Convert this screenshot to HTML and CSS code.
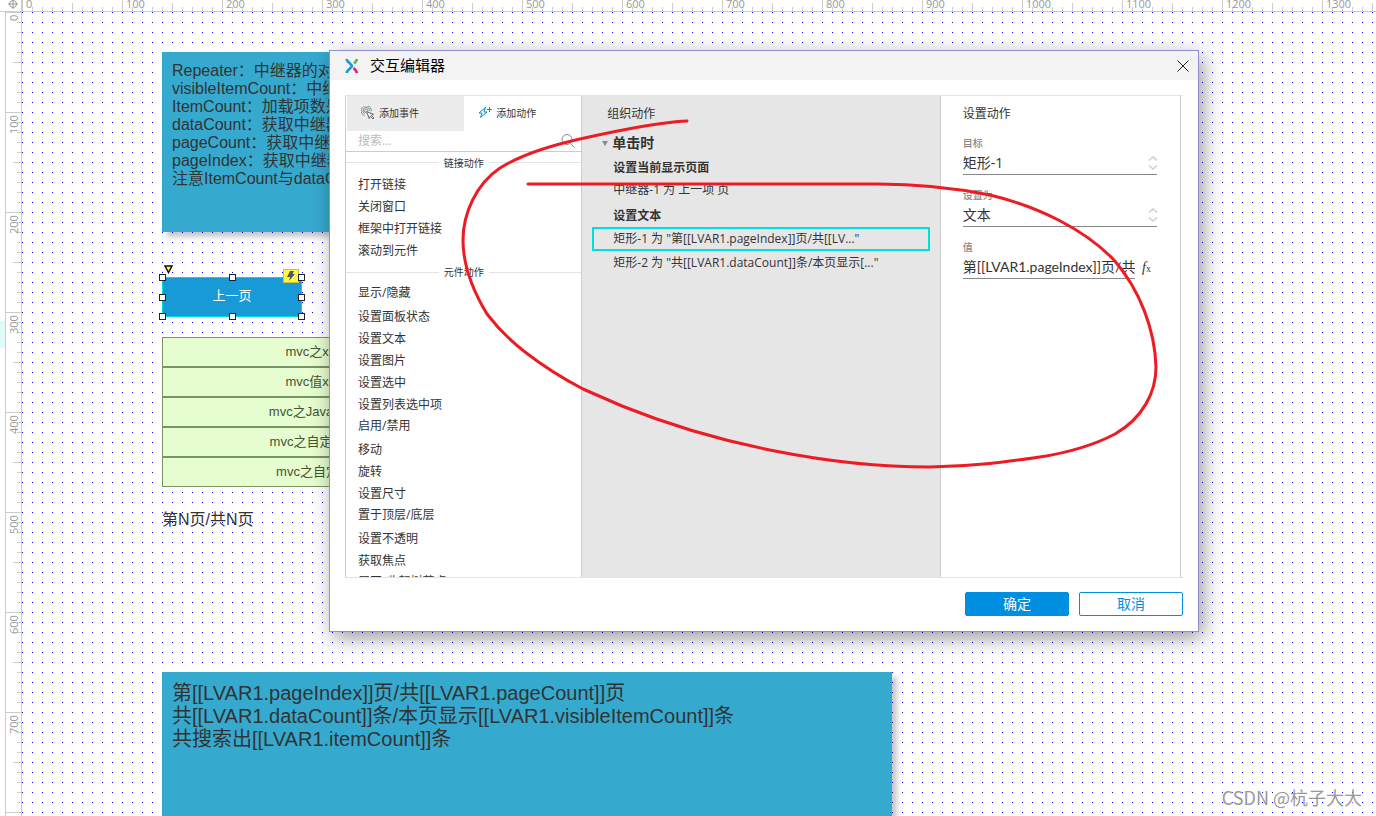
FILE: index.html
```html
<!DOCTYPE html>
<html lang="zh-CN">
<head>
<meta charset="utf-8">
<title>交互编辑器</title>
<link rel="stylesheet" href="styles.css">
</head>
<body>
<div class="app">
  <div class="ruler-corner">
    <svg width="12" height="12" viewBox="0 0 12 12" aria-hidden="true"><circle cx="6" cy="4" r="3.5"/><path d="M6 -1V9M1 4H11"/></svg>
  </div>
  <div class="ruler-top">
    <span>0</span><span>100</span><span>200</span><span>300</span><span>400</span><span>500</span><span>600</span><span>700</span><span>800</span><span>900</span><span>1000</span><span>1100</span><span>1200</span><span>1300</span>
  </div>
  <div class="ruler-side">
    <span class="ruler-mark"></span>
    <div class="ruler-scale">
      <span>0</span><span>100</span><span>200</span><span>300</span><span>400</span><span>500</span><span>600</span><span>700</span>
    </div>
  </div>

  <main class="canvas">
    <div class="note note-fields">Repeater：中继器的对象<br>visibleItemCount：中继器<br>ItemCount：加载项数是<br>dataCount：获取中继器<br>pageCount：获取中继器<br>pageIndex：获取中继器<br>注意ItemCount与dataCount</div>

    <div class="shape">
      <button class="shape-button" type="button">上一页</button>
      <svg class="shape-marker" width="10" height="9" viewBox="0 0 10 9" aria-hidden="true"><path d="M1 1H8L4.500 7.500Z"/></svg>
      <span class="bolt"><svg width="8" height="10" viewBox="0 0 8 10" aria-hidden="true"><path d="M3 0H7L5.500 3H8L2 10L3 6H0Z"/></svg></span>
      <i class="handle tl"></i><i class="handle tc"></i><i class="handle tr"></i>
      <i class="handle ml"></i><i class="handle mr"></i>
      <i class="handle bl"></i><i class="handle bc"></i><i class="handle br"></i>
    </div>

    <table class="repeater">
      <tbody>
        <tr><td>mvc之xml建模</td></tr>
        <tr><td>mvc值xml建模</td></tr>
        <tr><td>mvc之Java反射机制</td></tr>
        <tr><td>mvc之自定义标签库</td></tr>
        <tr><td>mvc之自定义标签</td></tr>
      </tbody>
    </table>

    <p class="page-label">第N页/共N页</p>

    <div class="note note-values">第[[LVAR1.pageIndex]]页/共[[LVAR1.pageCount]]页<br>共[[LVAR1.dataCount]]条/本页显示[[LVAR1.visibleItemCount]]条<br>共搜索出[[LVAR1.itemCount]]条</div>

    <p class="watermark">CSDN @杭子大大</p>

    <section class="dialog" role="dialog" aria-labelledby="dialog-title">
      <header class="dialog-head">
        <svg class="logo" width="14" height="16" viewBox="0 0 14 16" aria-hidden="true">
          <path class="logo-blue" d="M1.500 1C2 4 6 5.500 7 8C6 10.500 2 12 1.500 15"/>
          <path class="logo-green" d="M12 1C11.700 3 10.500 4 9 5.500"/>
          <path class="logo-pink" d="M8.500 10C10 11.500 11.700 13 12 15"/>
        </svg>
        <h1 id="dialog-title">交互编辑器</h1>
        <button class="close" type="button" aria-label="关闭"><svg width="12" height="12" viewBox="0 0 12 12" aria-hidden="true"><path d="M.5 .5L11.500 11.500M11.500 .5L.5 11.500"/></svg></button>
      </header>
      <div class="panels">
        <div class="panel actions">
          <div class="tabs">
            <button class="tab" type="button">
              <svg class="icon-event" width="14" height="14" viewBox="0 0 14 14" aria-hidden="true"><path d="M3.500 9.500A5 5 0 1 1 10.200 5.300M4 7.800A3.300 3.300 0 1 1 8.600 4.700M5 6.500A1.700 1.700 0 1 1 6.900 5"/><path class="cursor" d="M5.500 5.500L12.500 8.300L10.300 9.400L13 12L12 13L9.300 10.400L8.200 12.500Z"/></svg>
              添加事件</button>
            <button class="tab active" type="button">
              <svg class="icon-action" width="14" height="14" viewBox="0 0 14 14" aria-hidden="true"><path d="M7.500 1.500L1 7H4L2.500 11.500L9 6H6L7.500 1.500ZM9 3.500H14M11.500 1V6"/></svg>
              添加动作</button>
          </div>
          <label class="search">
            <input type="text" placeholder="搜索..." aria-label="搜索">
            <svg width="14" height="14" viewBox="0 0 14 14" aria-hidden="true"><circle cx="6" cy="5.500" r="5"/><path d="M9.500 9.500L13.500 13.500"/></svg>
          </label>
          <div class="action-list">
            <h2 class="group">链接动作</h2>
            <button type="button">打开链接</button>
            <button type="button">关闭窗口</button>
            <button type="button">框架中打开链接</button>
            <button type="button">滚动到元件</button>
            <h2 class="group">元件动作</h2>
            <button class="mixed" type="button">显示/隐藏</button>
            <button type="button">设置面板状态</button>
            <button type="button">设置文本</button>
            <button type="button">设置图片</button>
            <button type="button">设置选中</button>
            <button type="button">设置列表选中项</button>
            <button class="mixed" type="button">启用/禁用</button>
            <button type="button">移动</button>
            <button type="button">旋转</button>
            <button type="button">设置尺寸</button>
            <button class="mixed" type="button">置于顶层/底层</button>
            <button type="button">设置不透明</button>
            <button type="button">获取焦点</button>
            <button class="mixed" type="button">展开/收起树节点</button>
          </div>
        </div>
        <div class="panel organize">
          <h2>组织动作</h2>
          <h3><span class="caret"></span>单击时</h3>
          <h4>设置当前显示页面</h4>
          <button class="step" type="button">中继器-1 为 上一项 页</button>
          <h4>设置文本</h4>
          <button class="step selected" type="button">矩形-1 为 "第[[LVAR1.pageIndex]]页/共[[LV..."</button>
          <button class="step" type="button">矩形-2 为 "共[[LVAR1.dataCount]]条/本页显示[..."</button>
        </div>
        <form class="panel settings">
          <h2>设置动作</h2>
          <label for="target">目标</label>
          <div class="field">
            <select id="target"><option>矩形-1</option></select>
            <svg width="10" height="14" viewBox="0 0 10 14" aria-hidden="true"><path d="M1 4.500L5 1L9 4.500M1 9.500L5 13L9 9.500"/></svg>
          </div>
          <label for="set-to">设置为</label>
          <div class="field">
            <select id="set-to"><option>文本</option></select>
            <svg width="10" height="14" viewBox="0 0 10 14" aria-hidden="true"><path d="M1 4.500L5 1L9 4.500M1 9.500L5 13L9 9.500"/></svg>
          </div>
          <label for="value">值</label>
          <div class="value-row">
            <input id="value" type="text" value="第[[LVAR1.pageIndex]]页/共">
            <button class="fx" type="button" aria-label="编辑值"><i>f</i><small>x</small></button>
          </div>
        </form>
      </div>
      <footer class="dialog-foot">
        <button class="primary" type="button">确定</button>
        <button class="secondary" type="button">取消</button>
      </footer>
    </section>
  </main>

  <svg class="ink" aria-hidden="true">
    <path d="M687 121C665 122 620 130 580 139C540 148 516 158 500 168C476 184 463 214 463 240C463 262 470 286 487 314C500 331 512 342 525 352C543 366 562 378 583 389L622 406C674 427 724 441 775 451C830 462 880 467 930 467C980 466 1012 461 1040 457C1072 452 1096 444 1115 434C1143 418 1156 392 1156 367C1155 330 1140 290 1114 260C1085 230 1040 207 990 195C950 187 910 184 877 184L528 184"/>
  </svg>
</div>
</body>
</html>
```
FILE: styles.css
```css
* { box-sizing: border-box; }

body {
  margin: 0;
  background: #fff;
  color: #333;
  font-family: "Open Sans", "Noto Sans CJK SC", sans-serif;
  font-size: 12px;
}

h1, h2, h3, h4, p { margin: 0; font-weight: 400; }

button, input, select {
  margin: 0;
  padding: 0;
  border: 0;
  border-radius: 0;
  outline: 0;
  background: none;
  color: inherit;
  font: inherit;
}

svg { flex: none; fill: none; }

.app {
  position: relative;
  display: grid;
  grid-template-columns: 22px 1fr;
  grid-template-rows: 12px 1fr;
  height: 100vh;
  overflow: hidden;
}

/* Rulers */
.ruler-corner {
  padding-left: 7px;
  border-right: 1px solid #ccc;
  border-bottom: 1px solid #ccc;
  overflow: hidden;
}
.ruler-corner svg { display: block; stroke: #999; }

.ruler-top, .ruler-scale {
  display: flex;
  overflow: hidden;
  color: #999;
  font-size: 11px;
}
.ruler-top {
  border-bottom: 1px solid #ccc;
  line-height: 7px;
  background:
    repeating-linear-gradient(90deg, #ccc 0 1px, transparent 1px 100px),
    repeating-linear-gradient(90deg, #ccc 0 1px, transparent 1px 50px) 0 3px no-repeat,
    repeating-linear-gradient(90deg, #ccc 0 1px, transparent 1px 10px) 0 7px no-repeat;
}
.ruler-top span { flex: 0 0 100px; padding-left: 4px; }

.ruler-side { display: flex; min-height: 0; overflow: hidden; }
.ruler-mark {
  flex: 0 0 5px;
  height: 27px;
  margin-top: 309px;
  background: #e0fafa;
}
.ruler-scale {
  flex: 1;
  flex-direction: column;
  border-left: 1px solid #ccc;
  border-right: 1px solid #ccc;
  background:
    repeating-linear-gradient(#ccc 0 1px, transparent 1px 100px),
    repeating-linear-gradient(#ccc 0 1px, transparent 1px 50px) 7px 0 no-repeat,
    repeating-linear-gradient(#ccc 0 1px, transparent 1px 10px) 11px 0 no-repeat;
}
.ruler-scale span {
  flex: 0 0 100px;
  padding-bottom: 3px;
  line-height: 15px;
  text-align: right;
  writing-mode: vertical-rl;
  transform: rotate(180deg);
}

/* Canvas */
.canvas {
  position: relative;
  overflow: hidden;
  background-image:
    linear-gradient(90deg, transparent 1px, #fff 1px),
    linear-gradient(#00f 1px, #fff 1px);
  background-size: 10px 10px;
}

.note {
  position: absolute;
  left: 140px;
  width: 730px;
  padding: 10px;
  background: #36a9ce;
  box-shadow: 5px 5px 5px rgba(0, 0, 0, .22);
  font-family: "Liberation Sans", "Noto Sans CJK SC", sans-serif;
  white-space: nowrap;
}
.note-fields { top: 40px; height: 180px; font-size: 16px; line-height: 18px; }
.note-values { top: 660px; height: 180px; font-size: 20px; line-height: 23px; }

.shape { position: absolute; left: 140px; top: 265px; width: 140px; height: 40px; }
.shape-button {
  width: 100%;
  height: 100%;
  padding-bottom: 5px;
  border: 1px solid #00d9de;
  background: #189ad6;
  color: #fff;
  font-size: 13px;
}
.shape-marker { position: absolute; left: 2px; top: -12px; fill: #ff3; stroke: #111; stroke-width: 1.5; }
.bolt {
  position: absolute;
  right: 3px;
  top: -8px;
  display: grid;
  place-items: center;
  width: 16px;
  height: 14px;
  border: 1px solid #c9c33a;
  background: #fff845;
}
.bolt path { fill: #555; }
.handle { position: absolute; width: 7px; height: 7px; border: 1px solid #222; background: #fff; }
.tl, .tc, .tr { top: -3px; }
.ml, .mr { top: 17px; }
.bl, .bc, .br { bottom: -3px; }
.tl, .ml, .bl { left: -3px; }
.tc, .bc { left: 67px; }
.tr, .mr, .br { right: -3px; }

.repeater {
  position: absolute;
  left: 140px;
  top: 325px;
  width: 330px;
  border-spacing: 0;
  font-family: "Liberation Sans", "Noto Sans CJK SC", sans-serif;
  font-size: 13px;
}
.repeater td {
  height: 30px;
  padding: 0;
  border: 1px solid #799463;
  background: #e6fdcf;
  color: #43552f;
  line-height: 20px;
  text-align: center;
}

.page-label {
  position: absolute;
  left: 140px;
  top: 498px;
  font: 16px/20px "Liberation Sans", "Noto Sans CJK SC", sans-serif;
}

.watermark {
  position: absolute;
  right: 14px;
  bottom: 7px;
  color: #999;
  font: 18px/24px "Noto Sans CJK SC", sans-serif;
  text-shadow: 1px 1px 0 #fff;
}

/* Dialog */
.dialog {
  position: absolute;
  left: 307px;
  right: 177px;
  top: 38px;
  border: 1px solid #8f8fcf;
  background: #fff;
  box-shadow: 4px 6px 20px rgba(0, 0, 0, .4);
}
.dialog-head {
  display: flex;
  align-items: center;
  height: 29px;
  padding: 0 9px 0 15px;
  background: #f3f3f3;
  color: #000;
}
.dialog-head h1 { margin: 0 auto 0 11px; padding-bottom: 2px; font-size: 15px; line-height: 26px; }
.logo path { stroke-width: 2.6; }
.logo-blue { stroke: #1a9ad6; }
.logo-green { stroke: #6cb33f; }
.logo-pink { stroke: #e6187f; }
.close { display: grid; }
.close svg { stroke: #222; }

.panels {
  display: grid;
  grid-template-columns: 236fr 359fr 240fr;
  height: 483px;
  margin: 15px 15px 0 15px;
  padding-right: 2px;
  border-top: 1px solid #e3e3e3;
  border-bottom: 1px solid #e3e3e3;
}
.panel { min-width: 0; min-height: 0; overflow: hidden; }

.actions { display: flex; flex-direction: column; border-left: 1px solid #ccc; }
.tabs { display: grid; grid-template-columns: 1fr 1fr; flex: none; padding-left: 1px; }
.tab {
  display: flex;
  align-items: center;
  gap: 4px;
  height: 35px;
  padding: 0 0 2px 14px;
  background: #ececec;
  font-size: 10px;
}
.tab.active { background: #fff; }
.icon-event { stroke: #888; }
.icon-event .cursor { fill: #ececec; stroke: #666; }
.icon-action { stroke: #008fe0; }

.search {
  display: flex;
  flex: none;
  align-items: center;
  height: 21px;
  padding: 0 6px 0 12px;
  border-bottom: 1px solid #ccc;
}
.search input { flex: 1; min-width: 0; line-height: 18px; }
.search input::placeholder { color: #bbb; }
.search svg { stroke: #888; }

.action-list { display: flex; flex: 1; flex-direction: column; min-height: 0; overflow: hidden; }
.action-list > * { flex: none; }
.group {
  display: flex;
  align-items: center;
  gap: 5px;
  height: 22px;
  padding-bottom: 1px;
  font-size: 10px;
  line-height: 18px;
}
.group ~ .group { height: 21px; }
.group::before, .group::after { content: ""; flex: 1; height: 1px; background: #e3e3e3; }
.action-list button { height: 22px; padding-left: 12px; line-height: 20px; text-align: left; }
.action-list .mixed { height: 23px; padding-bottom: 3px; }

.organize {
  display: flex;
  flex-direction: column;
  padding: 8px 10px 0;
  border-left: 1px solid #ccc;
  border-right: 1px solid #ccc;
  background: #e6e6e6;
}
.organize h2 { margin-left: 15px; font-size: 12px; line-height: 20px; }
.organize h3 {
  display: flex;
  align-items: center;
  gap: 4px;
  margin: 9px 0 5px 10px;
  font-size: 14px;
  font-weight: 700;
  line-height: 20px;
}
.caret { border: solid transparent; border-width: 5px 3px 0; border-top-color: #888; }
.organize h4 { margin-left: 21px; font-size: 12px; font-weight: 700; line-height: 20px; }
.step { height: 24px; padding-left: 21px; line-height: 20px; text-align: left; white-space: nowrap; }
.step + h4 { margin-top: 4px; margin-bottom: 1px; }
.step.selected { padding-left: 19px; border: 2px solid #00dfdf; }

.settings { padding: 8px 23px 0 22px; border-right: 1px solid #ccc; }
.settings h2 { margin-bottom: 12px; font-size: 12px; line-height: 20px; }
.settings label {
  display: block;
  height: 14px;
  color: #888;
  font-size: 10px;
  font-weight: 500;
  line-height: 14px;
}
.field { position: relative; height: 25px; margin-bottom: 13px; border-bottom: 1px solid #888; }
.field select { width: 100%; height: 24px; appearance: none; font-size: 14px; }
.field svg { position: absolute; right: -1px; top: 6px; stroke: #ccc; stroke-width: 1.4; pointer-events: none; }
.value-row { display: flex; gap: 7px; height: 25px; }
.value-row input {
  flex: 1;
  min-width: 0;
  border-bottom: 1px solid #888;
  font-family: Lato, "Noto Sans CJK SC", sans-serif;
  font-size: 14px;
}
.fx { width: 15px; padding-top: 3px; font: 14px/20px "Liberation Serif", serif; text-align: left; }
.fx small { font-size: 10px; }

.dialog-foot { display: flex; justify-content: flex-end; gap: 10px; padding: 14px 15px 15px; }
.dialog-foot button { width: 104px; height: 24px; border: 1px solid #008fe0; border-radius: 2px; font-size: 14px; line-height: 20px; }
.primary { background: #008fe0; color: #fff; }
.secondary { background: #fff; color: #008fe0; }

.ink { position: absolute; width: 100%; height: 100%; pointer-events: none; }
.ink path { stroke: #ed1c24; stroke-width: 3; stroke-linecap: round; stroke-linejoin: round; }
```
